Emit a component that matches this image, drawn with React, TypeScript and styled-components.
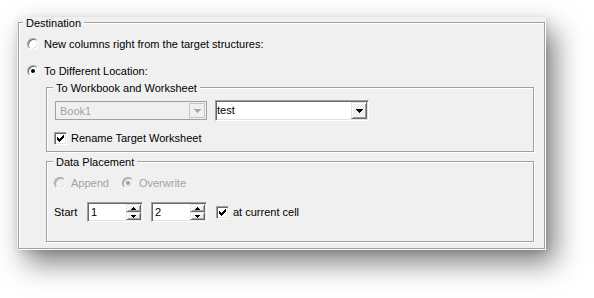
import React from "react";
import styled, { createGlobalStyle, css } from "styled-components";

const GlobalStyle = createGlobalStyle`
  html, body {
    margin: 0;
    padding: 0;
    background: #ffffff;
  }
  body {
    font-family: "Liberation Sans", Arial, sans-serif;
    font-size: 11px;
    color: #000;
  }
`;

const sunken = css`
  border: 1px solid;
  border-color: #a0a0a0 #ffffff #ffffff #a0a0a0;
  box-shadow: inset 1px 1px 0 #696969, inset -1px -1px 0 #e3e3e3;
`;

const raised = css`
  border: 1px solid;
  border-color: #e3e3e3 #696969 #696969 #e3e3e3;
  box-shadow: inset 1px 1px 0 #ffffff, inset -1px -1px 0 #a0a0a0;
  background: #f0f0f0;
`;

const Page = styled.div`
  box-sizing: border-box;
  min-height: 100vh;
  padding: 17px 0 0 17px;
  overflow: hidden;
`;

const Panel = styled.div`
  width: 529px;
  height: 233px;
  box-sizing: border-box;
  padding: 5px 0 0 1px;
  background: #f0f0f0;
  box-shadow: 9px 13px 26px rgba(0, 0, 0, 0.5), 1px 2px 6px rgba(0, 0, 0, 0.12);
`;

const GroupBox = styled.div<{ $w: number; $h: number; $pad: string }>`
  position: relative;
  box-sizing: border-box;
  width: ${(p) => p.$w}px;
  height: ${(p) => p.$h}px;
  padding: ${(p) => p.$pad};
  border: 1px solid #a0a0a0;
  box-shadow: inset 1px 1px 0 #ffffff, 1px 1px 0 #ffffff;
  display: flex;
  flex-direction: column;
`;

const Legend = styled.span<{ $left: number }>`
  position: absolute;
  top: -6px;
  left: ${(p) => p.$left}px;
  padding: 0 3px;
  line-height: 13px;
  background: #f0f0f0;
  white-space: nowrap;
`;

const Row = styled.div<{ $top?: number; $h?: number; $gap?: number }>`
  display: flex;
  align-items: center;
  height: ${(p) => p.$h ?? 16}px;
  margin-top: ${(p) => p.$top ?? 0}px;
  gap: ${(p) => p.$gap ?? 0}px;
`;

const Nested = styled.div<{ $top: number }>`
  margin: ${(p) => p.$top}px 0 0 19px;
`;

const Spacer = styled.span<{ $w: number }>`
  flex: none;
  width: ${(p) => p.$w}px;
`;

const Option = styled.label<{ $gap: number; $disabled?: boolean }>`
  display: flex;
  align-items: center;
  gap: ${(p) => p.$gap}px;
  line-height: 13px;
  white-space: nowrap;
  color: ${(p) => (p.$disabled ? "#a3a3a3" : "#000")};
`;

const RadioCircle = styled.span<{ $checked?: boolean; $disabled?: boolean }>`
  flex: none;
  width: 12px;
  height: 12px;
  box-sizing: border-box;
  border-radius: 50%;
  border: 1px solid;
  border-color: #a0a0a0 #ffffff #ffffff #a0a0a0;
  box-shadow: inset 1px 1px 0 ${(p) => (p.$disabled ? "#b5b5b5" : "#6e6e6e")},
    inset -1px -1px 0 #e3e3e3;
  background: ${(p) => (p.$disabled ? "#f0f0f0" : "#ffffff")};
  display: flex;
  align-items: center;
  justify-content: center;
  &::after {
    content: "";
    display: ${(p) => (p.$checked ? "block" : "none")};
    width: 4px;
    height: 4px;
    border-radius: 50%;
    background: ${(p) => (p.$disabled ? "#a0a0a0" : "#000")};
  }
`;

const CheckSquare = styled.span`
  flex: none;
  width: 13px;
  height: 13px;
  box-sizing: border-box;
  ${sunken};
  background: #ffffff;
  display: flex;
  align-items: center;
  justify-content: center;
`;

const Combo = styled.div<{ $disabled?: boolean }>`
  display: flex;
  box-sizing: border-box;
  padding: 1px;
  ${(p) =>
    p.$disabled
      ? css`
          width: 152px;
          height: 19px;
          margin: 1px;
          border: 1px solid #a0a0a0;
          background: #f0f0f0;
        `
      : css`
          width: 154px;
          height: 21px;
          ${sunken};
          background: #ffffff;
        `}
`;

const ComboText = styled.span<{ $disabled?: boolean }>`
  flex: 1;
  line-height: 17px;
  padding-left: ${(p) => (p.$disabled ? 3 : 0)}px;
  color: ${(p) => (p.$disabled ? "#a3a3a3" : "#000")};
`;

const DropButton = styled.span<{ $disabled?: boolean }>`
  flex: none;
  width: 16px;
  box-sizing: border-box;
  display: flex;
  align-items: center;
  justify-content: center;
  ${(p) =>
    p.$disabled
      ? css`
          border: 1px solid #c4c4c4;
          background: #f0f0f0;
        `
      : raised}
`;

const SpinEdit = styled.div`
  display: flex;
  flex: none;
  width: 56px;
  height: 20px;
  box-sizing: border-box;
  ${sunken};
  background: #ffffff;
  padding: 1px;
`;

const SpinValue = styled.span`
  flex: 1;
  line-height: 17px;
  padding-left: 2px;
`;

const SpinButtons = styled.div`
  display: flex;
  flex-direction: column;
  width: 15px;
`;

const SpinButton = styled.span`
  flex: 1;
  box-sizing: border-box;
  ${raised};
  display: flex;
  align-items: center;
  justify-content: center;
`;

const FieldLabel = styled.span`
  width: 33px;
  line-height: 13px;
`;

const Arrow = ({ color = "#000" }: { color?: string }) => (
  <svg width="7" height="4" viewBox="0 0 7 4">
    <path d="M0 0h7v1h-1v1h-1v1h-1v1h-1v-1h-1v-1h-1v-1h-1z" fill={color} />
  </svg>
);

const TinyArrow = ({ up }: { up?: boolean }) => (
  <svg width="5" height="3" viewBox="0 0 5 3">
    {up ? (
      <path d="M2 0h1v1h1v1h1v1h-5v-1h1v-1h1z" fill="#000" />
    ) : (
      <path d="M0 0h5v1h-1v1h-1v1h-1v-1h-1v-1h-1z" fill="#000" />
    )}
  </svg>
);

const CheckMark = () => (
  <svg width="7" height="7" viewBox="0 0 7 7">
    <path d="M6 0h1v3h-1v1h-1v1h-1v1h-1v1h-1v-1h-1v-1h-1v-3h1v1h1v1h1v-1h1v-1h1v-1h1z" fill="#000" />
  </svg>
);

const Radio = ({
  label,
  checked,
  disabled,
}: {
  label: string;
  checked?: boolean;
  disabled?: boolean;
}) => (
  <Option $gap={5} $disabled={disabled}>
    <RadioCircle $checked={checked} $disabled={disabled} />
    {label}
  </Option>
);

const Check = ({ label }: { label: string }) => (
  <Option $gap={4}>
    <CheckSquare>
      <CheckMark />
    </CheckSquare>
    {label}
  </Option>
);

const Spin = ({ value }: { value: number }) => (
  <SpinEdit>
    <SpinValue>{value}</SpinValue>
    <SpinButtons>
      <SpinButton>
        <TinyArrow up />
      </SpinButton>
      <SpinButton>
        <TinyArrow />
      </SpinButton>
    </SpinButtons>
  </SpinEdit>
);

const App = () => {
  return (
    <Page>
      <GlobalStyle />
      <Panel>
        <GroupBox $w={527} $h={227} $pad="13px 0 0 8px">
          <Legend $left={4}>Destination</Legend>
          <Row>
            <Radio label="New columns right from the target structures:" />
          </Row>
          <Row $top={11}>
            <Radio label="To Different Location:" checked />
          </Row>

          <Nested $top={8}>
            <GroupBox $w={488} $h={65} $pad="12px 0 0 7px">
              <Legend $left={6}>To Workbook and Worksheet</Legend>
              <Row $h={21} $gap={7}>
                <Combo $disabled>
                  <ComboText $disabled>Book1</ComboText>
                  <DropButton $disabled>
                    <Arrow color="#a8a8a8" />
                  </DropButton>
                </Combo>
                <Combo>
                  <ComboText>test</ComboText>
                  <DropButton>
                    <Arrow />
                  </DropButton>
                </Combo>
              </Row>
              <Row $top={9}>
                <Check label="Rename Target Worksheet" />
              </Row>
            </GroupBox>
          </Nested>

          <Nested $top={9}>
            <GroupBox $w={488} $h={81} $pad="13px 0 0 7px">
              <Legend $left={6}>Data Placement</Legend>
              <Row $gap={13}>
                <Radio label="Append" disabled />
                <Radio label="Overwrite" checked disabled />
              </Row>
              <Row $top={11} $h={20}>
                <FieldLabel>Start</FieldLabel>
                <Spin value={1} />
                <Spacer $w={8} />
                <Spin value={2} />
                <Spacer $w={9} />
                <Check label="at current cell" />
              </Row>
            </GroupBox>
          </Nested>
        </GroupBox>
      </Panel>
    </Page>
  );
};

export default App;
